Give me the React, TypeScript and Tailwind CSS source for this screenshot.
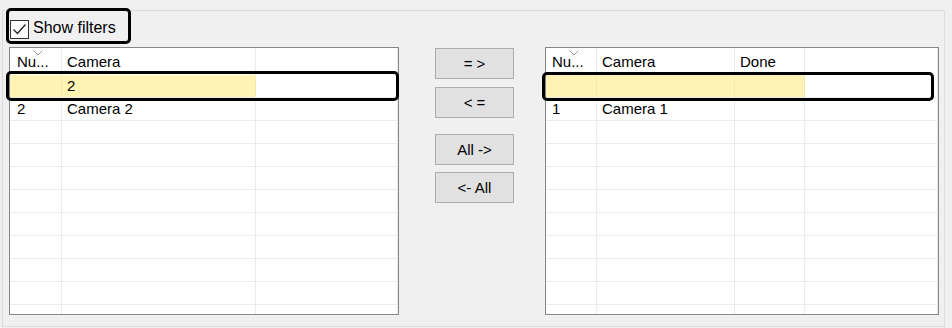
import React from "react";

type Col = { label: string; w: string; pl: string; yellow: boolean; data: string; filter: string };

function Chevron() {
  return (
    <svg width="10" height="6" viewBox="0 0 10 6" className="absolute left-[23px] top-[2px]">
      <polyline points="0.5,0.5 5,5 9.5,0.5" fill="none" stroke="#9a9a9a" strokeWidth="1" />
    </svg>
  );
}

function Grid({ cols, width }: { cols: Col[]; width: string }) {
  const empty = Array.from({ length: 9 });
  return (
    <div className={`${width} h-[268px] border border-[#828790] bg-white overflow-hidden flex flex-col`}>
      <div className="flex h-[27px] shrink-0">
        {cols.map((c, i) => (
          <div
            key={i}
            className={`${c.w} ${c.pl} relative h-full flex items-center border-r border-[#ebebeb] pb-[1px] whitespace-nowrap`}
          >
            {i === 0 && <Chevron />}
            {c.label}
          </div>
        ))}
      </div>
      <div className="flex h-[23px] shrink-0 border-b border-[#ebebeb]">
        {cols.map((c, i) => (
          <div
            key={i}
            className={`${c.w} ${c.pl} h-full flex items-center pb-[2px] border-r ${c.yellow ? "bg-[#fff3b3] border-[#f3e8b0]" : "border-[#ebebeb]"}`}
          >
            {c.filter}
          </div>
        ))}
      </div>
      <div className="flex h-[23px] shrink-0 border-b border-[#ebebeb]">
        {cols.map((c, i) => (
          <div key={i} className={`${c.w} ${c.pl} h-full flex items-center pb-[2px] border-r border-[#ebebeb] whitespace-nowrap`}>
            {c.data}
          </div>
        ))}
      </div>
      {empty.map((_, r) => (
        <div key={r} className="flex h-[23px] shrink-0 border-b border-[#ebebeb]">
          {cols.map((c, i) => (
            <div key={i} className={`${c.w} h-full border-r border-[#ebebeb]`} />
          ))}
        </div>
      ))}
    </div>
  );
}

function Btn({ label, cls }: { label: string; cls: string }) {
  return (
    <div
      className={`${cls} w-[79px] h-[31px] bg-[#e1e1e1] border border-[#adadad] flex items-center justify-center text-black`}
    >
      {label}
    </div>
  );
}

export default function App() {
  const left: Col[] = [
    { label: "Nu...", w: "w-[52px]", pl: "pl-[7px]", yellow: true, data: "2", filter: "" },
    { label: "Camera", w: "w-[194px]", pl: "pl-[5px]", yellow: true, data: "Camera 2", filter: "2" },
    { label: "", w: "flex-1", pl: "pl-[5px]", yellow: false, data: "", filter: "" },
  ];
  const right: Col[] = [
    { label: "Nu...", w: "w-[51px]", pl: "pl-[6px]", yellow: true, data: "1", filter: "" },
    { label: "Camera", w: "w-[138px]", pl: "pl-[5px]", yellow: true, data: "Camera 1", filter: "" },
    { label: "Done", w: "w-[70px]", pl: "pl-[5px]", yellow: true, data: "", filter: "" },
    { label: "", w: "flex-1", pl: "pl-[5px]", yellow: false, data: "", filter: "" },
  ];
  return (
    <div className="relative w-[952px] h-[328px] bg-[#f0f0f0] overflow-hidden text-[15px] leading-none text-black font-['Liberation_Sans',Arial,sans-serif]">
      <div className="absolute left-[2px] top-[10px] w-[943px] h-[317px] border border-[#dcdcdc] bg-[#f0f0f0] pl-[6px]">
        <div className="h-[36px] flex items-center">
          <div className="ml-[1px] w-[19px] h-[19px] border border-[#333333] bg-white flex items-center justify-center">
            <svg width="15" height="13" viewBox="0 0 15 13">
              <polyline points="1.5,6.5 5.5,10.5 13.5,1.5" fill="none" stroke="#222222" strokeWidth="1.3" />
            </svg>
          </div>
          <span className="ml-[4px] text-[16px] mb-[2px]">Show filters</span>
        </div>
        <div className="flex items-start">
          <Grid cols={left} width="w-[390px]" />
          <div className="ml-[36px] mt-[1px] flex flex-col">
            <Btn label="= >" cls="" />
            <Btn label="< =" cls="mt-[8px]" />
            <Btn label="All ->" cls="mt-[16px]" />
            <Btn label="<- All" cls="mt-[7px]" />
          </div>
          <div className="ml-[31px]">
            <Grid cols={right} width="w-[394px]" />
          </div>
        </div>
      </div>
      <div className="absolute left-[6px] top-[8px] w-[125px] h-[36px] border-[3px] border-black rounded-[5px]" />
      <div className="absolute left-[6px] top-[71px] w-[393px] h-[30px] border-[3px] border-black rounded-[5px]" />
      <div className="absolute left-[542px] top-[72px] w-[392px] h-[29px] border-[3px] border-black rounded-[5px]" />
    </div>
  );
}
